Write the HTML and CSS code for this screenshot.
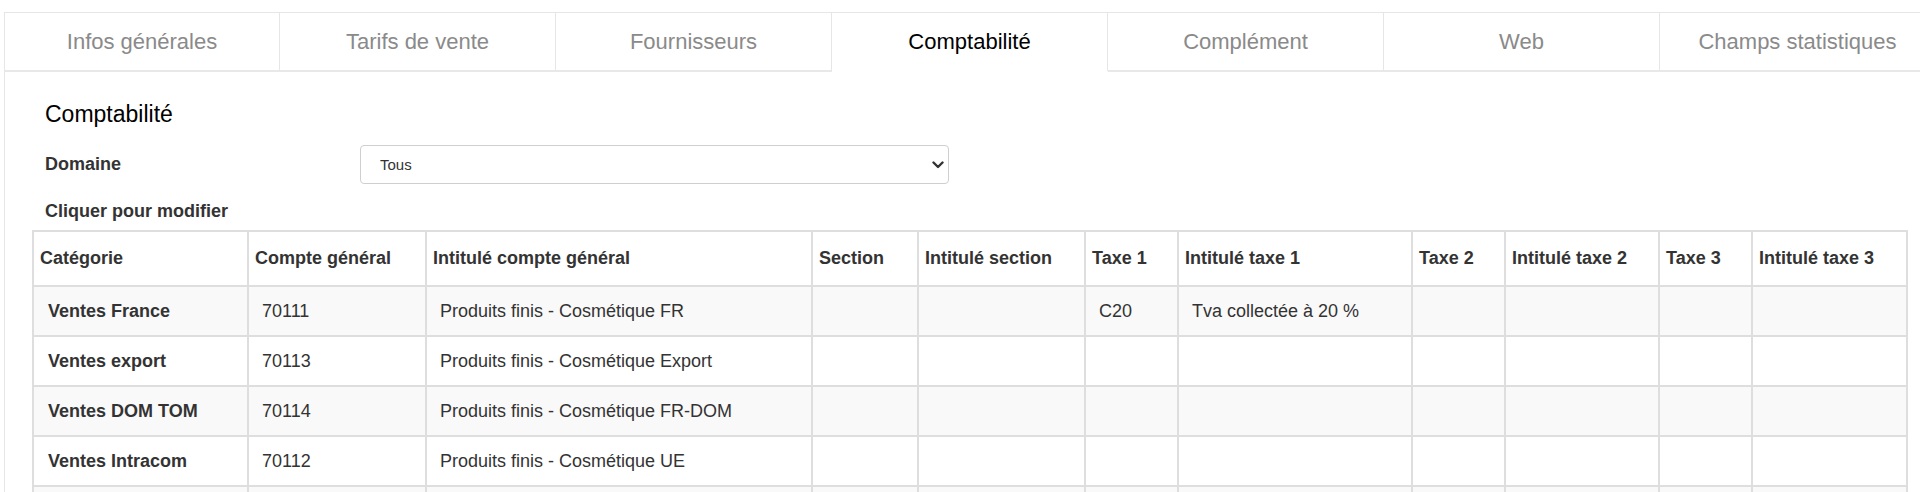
FILE: index.html
```html
<!DOCTYPE html>
<html lang="fr">
  <head>
    <meta charset="UTF-8" />
    <meta name="viewport" content="width=device-width, initial-scale=1.0" />
    <title>Article - Comptabilité</title>
    <link rel="stylesheet" href="styles.css">
  </head>
  <body>
    <div class="page">
      <ul class="tabs">
        <li class="tab">Infos générales</li>
        <li class="tab">Tarifs de vente</li>
        <li class="tab">Fournisseurs</li>
        <li class="tab active">Comptabilité</li>
        <li class="tab">Complément</li>
        <li class="tab">Web</li>
        <li class="tab">Champs statistiques</li>
      </ul>

      <div class="panel">
        <h2 class="panel-title">Comptabilité</h2>

        <div class="form-row">
          <label class="form-label" for="domaine">Domaine</label>
          <div class="select-wrap">
            <select id="domaine" class="form-select">
              <option>Tous</option>
              <option>Ventes</option>
              <option>Achats</option>
            </select>
            <svg class="select-arrow" viewBox="0 0 12 8" width="12" height="8">
              <path d="M1.5 1.5 L6 6 L10.5 1.5" fill="none" stroke="#333" stroke-width="2.4" stroke-linecap="round" stroke-linejoin="round" />
            </svg>
          </div>
        </div>

        <p class="hint">Cliquer pour modifier</p>

        <table class="grid">
          <colgroup>
            <col style="width: 215px" />
            <col style="width: 178px" />
            <col style="width: 386px" />
            <col style="width: 106px" />
            <col style="width: 167px" />
            <col style="width: 93px" />
            <col style="width: 234px" />
            <col style="width: 93px" />
            <col style="width: 154px" />
            <col style="width: 93px" />
            <col style="width: 155px" />
          </colgroup>
          <thead>
            <tr>
              <th>Catégorie</th>
              <th>Compte général</th>
              <th>Intitulé compte général</th>
              <th>Section</th>
              <th>Intitulé section</th>
              <th>Taxe 1</th>
              <th>Intitulé taxe 1</th>
              <th>Taxe 2</th>
              <th>Intitulé taxe 2</th>
              <th>Taxe 3</th>
              <th>Intitulé taxe 3</th>
            </tr>
          </thead>
          <tbody>
            <tr>
              <td><span class="cell cat">Ventes France</span></td>
              <td><span class="cell">70111</span></td>
              <td><span class="cell">Produits finis - Cosmétique FR</span></td>
              <td></td>
              <td></td>
              <td><span class="cell">C20</span></td>
              <td><span class="cell">Tva collectée à 20 %</span></td>
              <td></td>
              <td></td>
              <td></td>
              <td></td>
            </tr>
            <tr>
              <td><span class="cell cat">Ventes export</span></td>
              <td><span class="cell">70113</span></td>
              <td><span class="cell">Produits finis - Cosmétique Export</span></td>
              <td></td>
              <td></td>
              <td></td>
              <td></td>
              <td></td>
              <td></td>
              <td></td>
              <td></td>
            </tr>
            <tr>
              <td><span class="cell cat">Ventes DOM TOM</span></td>
              <td><span class="cell">70114</span></td>
              <td><span class="cell">Produits finis - Cosmétique FR-DOM</span></td>
              <td></td>
              <td></td>
              <td></td>
              <td></td>
              <td></td>
              <td></td>
              <td></td>
              <td></td>
            </tr>
            <tr>
              <td><span class="cell cat">Ventes Intracom</span></td>
              <td><span class="cell">70112</span></td>
              <td><span class="cell">Produits finis - Cosmétique UE</span></td>
              <td></td>
              <td></td>
              <td></td>
              <td></td>
              <td></td>
              <td></td>
              <td></td>
              <td></td>
            </tr>
            <tr class="empty-row">
              <td></td>
              <td></td>
              <td></td>
              <td></td>
              <td></td>
              <td></td>
              <td></td>
              <td></td>
              <td></td>
              <td></td>
              <td></td>
            </tr>
          </tbody>
        </table>
      </div>
    </div>
  </body>
</html>
```

FILE: styles.css
```css
html,
body {
  margin: 0;
  overflow: hidden;
  background-color: #fff;
}

body {
  font-family: "Liberation Sans", Arial, sans-serif;
  color: #333;
}

.page {
  width: 1940px;
  padding: 12px 0 0 4px;
}

/* Onglets */
.tabs {
  display: flex;
  list-style: none;
  margin: 0;
  padding: 0;
}

.tab {
  flex: 0 0 276px;
  box-sizing: border-box;
  height: 60px;
  display: flex;
  align-items: center;
  justify-content: center;
  border-top: 1px solid #e6e6e6;
  border-right: 1px solid #e6e6e6;
  border-bottom: 2px solid #e8e8e8;
  font-size: 22px;
  color: #8a8a8a;
  cursor: pointer;
}

.tab:first-child {
  border-left: 1px solid #e6e6e6;
}

.tab.active {
  color: #000;
  border-bottom-color: transparent;
}

/* Contenu de l'onglet */
.panel {
  border-left: 1px solid #e6e6e6;
  padding: 29px 0 0 27px;
  min-height: 480px;
}

.panel-title {
  margin: 0 0 0 13px;
  font-size: 23px;
  font-weight: normal;
  line-height: 26px;
  color: #000;
}

.form-row {
  display: flex;
  align-items: center;
  margin-top: 18px;
  padding-left: 13px;
}

.form-label {
  flex: 0 0 315px;
  font-size: 18px;
  font-weight: bold;
}

.select-wrap {
  position: relative;
  width: 589px;
  height: 39px;
}

.form-select {
  width: 100%;
  height: 100%;
  box-sizing: border-box;
  appearance: none;
  -webkit-appearance: none;
  border: 1px solid #cfcfcf;
  border-radius: 4px;
  background-color: #fff;
  padding: 0 0 0 19px;
  font-family: inherit;
  font-size: 15px;
  color: #333;
}

.select-arrow {
  position: absolute;
  right: 5px;
  top: 16px;
  pointer-events: none;
}

.hint {
  margin: 17px 0 0 13px;
  font-size: 18px;
  font-weight: bold;
  line-height: 21px;
}

/* Tableau des comptes */
.grid {
  margin-top: 8px;
  width: 1876px;
  table-layout: fixed;
  border-collapse: collapse;
  border: 2px solid #dedede;
  font-size: 18px;
  line-height: 20px;
}

.grid th,
.grid td {
  border: 2px solid #dedede;
  text-align: left;
  white-space: nowrap;
  overflow: hidden;
}

.grid th {
  padding: 16px 6px 17px;
  font-weight: bold;
  background-color: #fff;
}

.grid td {
  padding: 14px 6px;
}

.grid .empty-row td {
  height: 20px;
}

.grid tbody tr:nth-child(odd) {
  background-color: #f9f9f9;
}

.cell {
  display: block;
  padding-left: 7px;
}

.cell.cat {
  padding-left: 8px;
  font-weight: bold;
}
```
